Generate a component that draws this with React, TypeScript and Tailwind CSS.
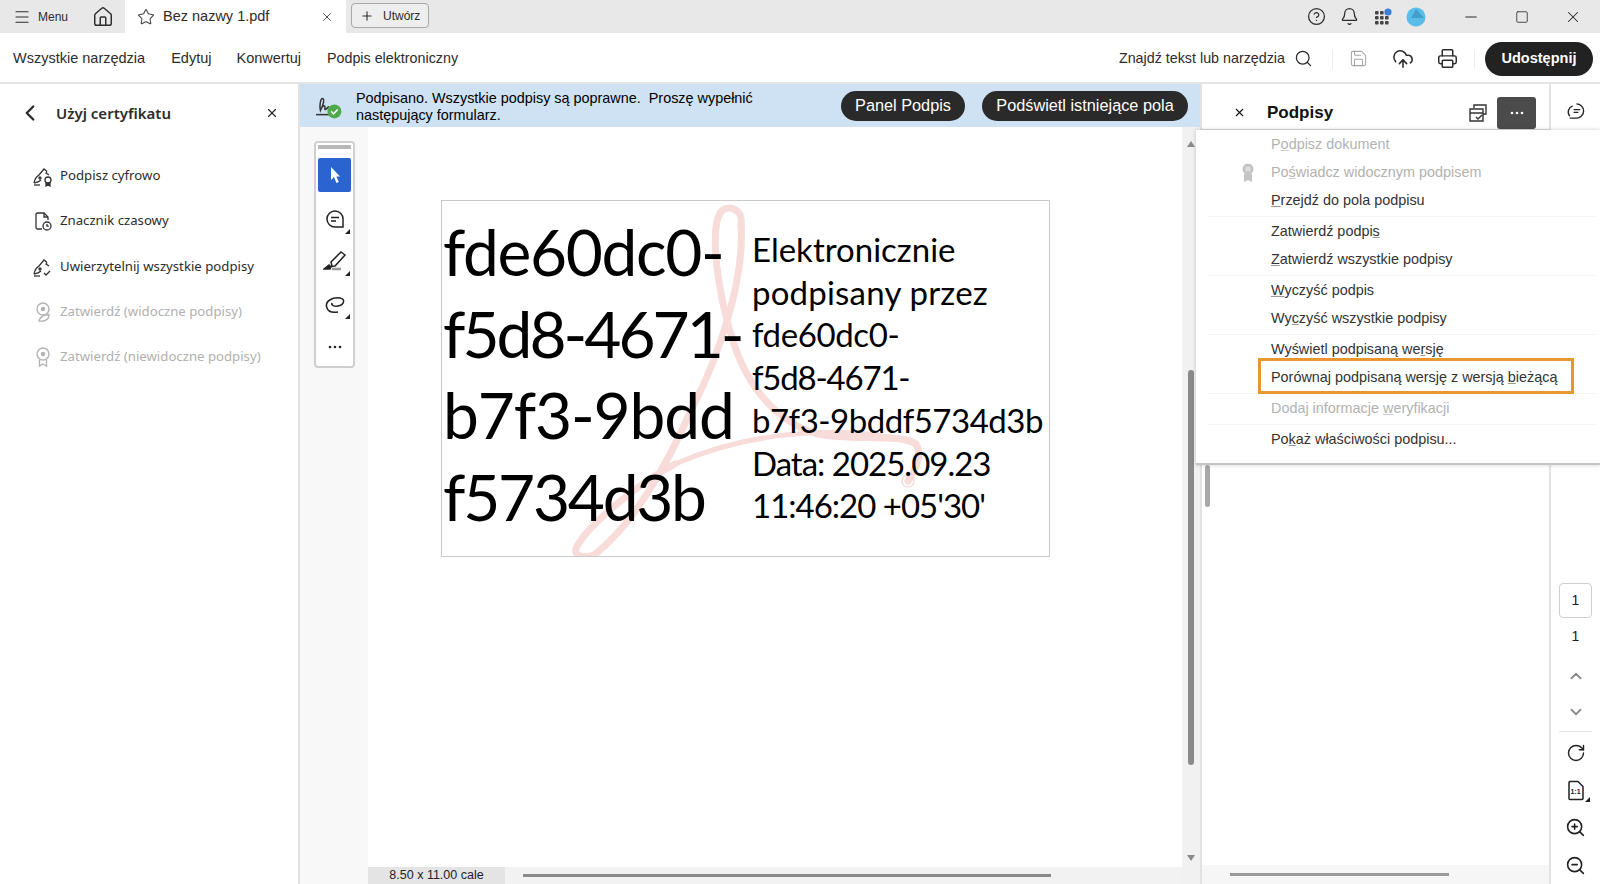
import {
  Bell,
  ChevronDown,
  ChevronLeft,
  ChevronUp,
  CircleHelp,
  CloudUpload,
  House,
  Menu,
  Minus,
  Plus,
  Printer,
  RotateCw,
  Save,
  Search,
  Square,
  Star,
  X,
  ZoomIn,
  ZoomOut,
} from 'lucide-react';

const Corner = ({ className = '' }: { className?: string }) => (
  <svg viewBox="0 0 5 5" className={`absolute w-[5px] h-[5px] ${className}`}>
    <path d="M5 0v5H0z" fill="#222" />
  </svg>
);

const Dots = ({ color }: { color: string }) => (
  <svg viewBox="0 0 14 4" className="w-[14px] h-[4px]">
    <circle cx="2" cy="2" r="1.300" fill={color} />
    <circle cx="7" cy="2" r="1.300" fill={color} />
    <circle cx="12" cy="2" r="1.300" fill={color} />
  </svg>
);

const SignIcon = ({ color, kind }: { color: string; kind: 'seal' | 'clock' | 'check' }) => (
  <svg viewBox="0 0 22 22" fill="none" stroke={color} strokeWidth="1.300" className="w-[22px] h-[22px]">
    {kind === 'clock' ? (
      <>
        <path d="M10 19H5.500A1.500 1.500 0 0 1 4 17.500v-13A1.500 1.500 0 0 1 5.500 3H12l4 4v3" />
        <path d="M12 3v4h4" />
        <circle cx="15" cy="16" r="4" />
        <path d="M15 14v2.200h1.800" />
      </>
    ) : (
      <>
        <path d="M2 18c.5-3 2-6 5-8l5-6 3 2.500" />
        <path d="M15 6.500l-1 1.500 3 2" />
        <path d="M2 18c3-.6 5-1.200 7-3" />
        <circle cx="8" cy="13" r="1" />
        <path d="M2 20h6" />
        {kind === 'seal' ? (
          <>
            <circle cx="16" cy="15" r="3" />
            <path d="M14 18v3l2-1 2 1v-3" fill={color} />
          </>
        ) : (
          <path d="M12 17l2 2 4-4" />
        )}
      </>
    )}
  </svg>
);

const SealIcon = ({ pen }: { pen?: boolean }) => (
  <svg viewBox="0 0 22 22" fill="none" stroke="#b5b5b5" strokeWidth="1.400" className="w-[22px] h-[22px]">
    <circle cx="11" cy="8" r="6" />
    <circle cx="11" cy="8" r="1.600" fill="#b5b5b5" />
    {pen ? (
      <path d="M7 20c.4-2 2-4.500 6-6l4-.5-.6 3.500c-2 2.500-5 3.500-9.400 3z" />
    ) : (
      <path d="M7.500 13.500V20l3.500-2 3.500 2v-6.500" />
    )}
  </svg>
);

const tools = [
  { label: 'Podpisz cyfrowo', icon: <SignIcon color="#333" kind="seal" />, off: false },
  { label: 'Znacznik czasowy', icon: <SignIcon color="#333" kind="clock" />, off: false },
  { label: 'Uwierzytelnij wszystkie podpisy', icon: <SignIcon color="#333" kind="check" />, off: false },
  { label: 'Zatwierdź (widoczne podpisy)', icon: <SealIcon pen />, off: true },
  { label: 'Zatwierdź (niewidoczne podpisy)', icon: <SealIcon />, off: true },
];

const TitleBar = () => (
  <div className="flex h-[33px] bg-[#e8e8e8] text-[#2c2c2c] shrink-0">
    <div className="flex items-center w-[125px] pl-[13px]">
      <Menu className="w-[18px] h-[18px]" strokeWidth={1.6} />
      <span className="ml-[7px] text-[12px]">Menu</span>
      <House className="w-[22px] h-[22px] ml-[24px]" strokeWidth={1.6} />
    </div>
    <div className="flex items-center w-[221px] bg-white pl-[12px]">
      <Star className="w-[18px] h-[18px] text-[#444]" strokeWidth={1.4} />
      <span className="ml-[8px] text-[14.500px]">Bez nazwy 1.pdf</span>
      <X className="w-[14px] h-[14px] ml-[51px] text-[#555]" strokeWidth={1.7} />
    </div>
    <div className="flex items-center h-[25px] w-[78px] mt-[3px] ml-[5px] pl-[8px] bg-[#eeeeee] border border-[#a8a8a8] rounded-[4px]">
      <Plus className="w-[14px] h-[14px]" strokeWidth={1.9} />
      <span className="ml-[9px] text-[12px]">Utwórz</span>
    </div>
    <div className="flex items-center ml-auto">
      <CircleHelp className="w-[19px] h-[19px]" strokeWidth={1.6} />
      <Bell className="w-[19px] h-[19px] ml-[14px]" strokeWidth={1.6} />
      <svg viewBox="0 0 18 18" className="w-[18px] h-[18px] ml-[15px]">
        {[1, 6, 11].map((y) =>
          [1, 6, 11].map((x) => <rect key={`${x}-${y}`} x={x} y={y + 2} width="3.600" height="3.600" rx="1" fill="#444" />),
        )}
        <circle cx="14" cy="4" r="3.600" fill="#3f7fd8" />
      </svg>
      <svg viewBox="0 0 20 20" className="w-[20px] h-[20px] ml-[14px]">
        <circle cx="10" cy="10" r="9.500" fill="#58bde9" />
        <path d="M10 2l8 9H5z" fill="#419fc9" />
      </svg>
      <Minus className="w-[18px] h-[18px] ml-[36px]" strokeWidth={1.4} />
      <Square className="w-[14px] h-[14px] ml-[35px]" strokeWidth={1.4} />
      <X className="w-[18px] h-[18px] ml-[35px] mr-[18px]" strokeWidth={1.4} />
    </div>
  </div>
);

const MainToolbar = () => (
  <div className="flex items-center h-[51px] pt-[2px] bg-white border-b-2 border-[#e4e4e4] text-[#2c2c2c] text-[14.500px] shrink-0">
    <span className="ml-[13px]">Wszystkie narzędzia</span>
    <span className="ml-[26px]">Edytuj</span>
    <span className="ml-[25px]">Konwertuj</span>
    <span className="ml-[26px] text-[14.300px]">Podpis elektroniczny</span>
    <span className="ml-auto text-[14.300px]">Znajdź tekst lub narzędzia</span>
    <Search className="w-[19px] h-[19px] ml-[9px]" strokeWidth={1.6} />
    <div className="w-px h-[20px] bg-[#ececec] ml-[19px]" />
    <Save className="w-[19px] h-[19px] ml-[16px] text-[#a5a5a5]" strokeWidth={1.3} />
    <CloudUpload className="w-[22px] h-[22px] ml-[24px]" strokeWidth={1.7} />
    <Printer className="w-[21px] h-[21px] ml-[23px]" strokeWidth={1.7} />
    <div className="w-px h-[20px] bg-[#ececec] ml-[16px]" />
    <div className="flex items-center justify-center w-[108px] h-[34px] ml-[10px] mr-[7px] rounded-full bg-[#222222] text-white font-bold">
      Udostępnij
    </div>
  </div>
);

const LeftPanel = () => (
  <aside className="flex flex-col w-[300px] shrink-0 bg-white border-r-2 border-[#e2e2e2] font-['Noto_Sans',sans-serif] text-[#2c2c2c]">
    <div className="flex items-center h-[58px] pl-[17px] pr-[19px]">
      <ChevronLeft className="w-[26px] h-[26px]" strokeWidth={2.2} />
      <span className="ml-[13px] text-[15px] font-semibold">Użyj certyfikatu</span>
      <X className="w-[14px] h-[14px] ml-auto" strokeWidth={2} />
    </div>
    <div className="flex flex-col mt-[23px] pl-[32px] gap-[23.300px]">
      {tools.map((t) => (
        <div key={t.label} className={`flex items-center h-[22px] text-[13.200px] ${t.off ? 'text-[#b0b0b0]' : ''}`}>
          {t.icon}
          <span className="ml-[6px]">{t.label}</span>
        </div>
      ))}
    </div>
  </aside>
);

const Banner = () => (
  <div className="flex items-center h-[43px] bg-[#cfe2f3] shrink-0 text-black text-[14.400px]">
    <svg viewBox="0 0 26 24" className="w-[28px] h-[26px] ml-[15px] shrink-0" fill="none">
      <path d="M5 16c3-5 4-11 2-11S4 12 5 16c1-3 3-5 4-4s-1 4 1 3 2-3 3-2" stroke="#333" strokeWidth="1.400" />
      <path d="M1 20h13" stroke="#333" strokeWidth="1.400" />
      <circle cx="18" cy="17" r="6.500" fill="#4ea94b" />
      <path d="M15 17l2.200 2.200 3.800-4" stroke="#fff" strokeWidth="1.500" />
    </svg>
    <div className="ml-[13px] pt-[2px] leading-[17px] w-[474px] whitespace-nowrap">
      Podpisano. Wszystkie podpisy są poprawne.&nbsp; Proszę wypełnić
      <br />
      następujący formularz.
    </div>
    <div className="flex items-center justify-center w-[124px] h-[30px] ml-[11px] rounded-full bg-[#2a2a2a] text-white text-[16.300px]">
      Panel Podpis
    </div>
    <div className="flex items-center justify-center w-[206px] h-[30px] ml-[17px] rounded-full bg-[#2a2a2a] text-white text-[16.300px]">
      Podświetl istniejące pola
    </div>
  </div>
);

const FloatingTools = () => (
  <div className="absolute left-[14px] top-[14px] flex flex-col items-center w-[41px] h-[227px] bg-white border-2 border-[#cfcfcf] rounded-[4px]">
    <div className="w-[33px] h-[4px] bg-[#b8b8b8] mt-[2px]" />
    <div className="flex items-center justify-center w-[33px] h-[34px] mt-[9px] bg-[#2b63d0] rounded-[2px]">
      <svg viewBox="0 0 14 18" className="w-[14px] h-[18px]">
        <path d="M3 1v13l3-3 2.400 6 2.400-1-2.400-5.500H12z" fill="#fff" />
      </svg>
    </div>
    <div className="relative mt-[15px] w-[24px] h-[24px]">
      <svg viewBox="0 0 24 24" fill="none" stroke="#222" strokeWidth="1.500" className="w-[24px] h-[24px]">
        <path d="M12 4a8 8 0 1 0 0 16h8v-8a8 8 0 0 0-8-8z" />
        <path d="M8 10.500h8M8 14h5" />
      </svg>
      <Corner className="right-[-3px] bottom-[-3px]" />
    </div>
    <div className="relative mt-[18px] w-[24px] h-[24px]">
      <svg viewBox="0 0 24 24" fill="none" stroke="#222" strokeWidth="1.500" className="w-[24px] h-[24px]">
        <path d="M8 13L18 3l4 3-10 11-3 .5z" />
        <path d="M1 20l5-4 2 2-1 2z" fill="#222" />
        <path d="M9 20h9" stroke="#999" strokeWidth="2.500" />
      </svg>
      <Corner className="right-[-3px] bottom-[-3px]" />
    </div>
    <div className="relative mt-[20px] w-[24px] h-[24px]">
      <svg viewBox="0 0 24 24" fill="none" stroke="#222" strokeWidth="1.500" className="w-[24px] h-[24px]">
        <path d="M4 15C1 8 10 4 17 5c6 1 4 7-2 8-4 .8-7-1-6-3M4 15c1 3 5 5 11 4" />
      </svg>
      <Corner className="right-[-3px] bottom-[-2px]" />
    </div>
    <div className="mt-[28px]">
      <Dots color="#222" />
    </div>
  </div>
);

const PdfStamp = () => (
  <div className="relative w-[609px] h-[357px] mt-[73px] ml-[73px] bg-white border border-[#c9c9c9] font-['Lato',sans-serif] text-black overflow-hidden">
    <svg viewBox="0 0 609 357" fill="none" stroke="#f7dcda" strokeLinecap="round" className="absolute left-0 top-0 w-[609px] h-[357px]">
      <path d="M299 24C302 8 285 2 278 12 268 30 275 90 291 140 305 185 335 222 376 233 410 240 460 232 474 243 482 255 470 275 466 280" strokeWidth="7" />
      <path d="M474 243C420 225 320 225 233 263" strokeWidth="5" />
      <path d="M299 24C303 80 275 160 250 207 225 265 190 325 152 354 140 358 130 354 135 345 150 320 200 280 233 263" strokeWidth="7" />
      <circle cx="466" cy="280" r="6" strokeWidth="1.500" />
    </svg>
    <div className="relative flex">
      <div className="w-[310px] pl-[1px] pt-[10px] text-[64px] leading-[81.600px] whitespace-nowrap">
        <div className="tracking-[-1.350px]">fde60dc0-</div>
        <div className="tracking-[-3px]">f5d8-4671-</div>
        <div className="tracking-[-1.150px]">b7f3-9bdd</div>
        <div className="tracking-[-2.250px]">f5734d3b</div>
      </div>
      <div className="pt-[27px] text-[33px] leading-[42.700px] whitespace-nowrap">
        <div>Elektronicznie</div>
        <div className="tracking-[0.200px]">podpisany przez</div>
        <div className="tracking-[-0.400px]">fde60dc0-</div>
        <div className="tracking-[-1.200px]">f5d8-4671-</div>
        <div className="tracking-[-0.500px]">b7f3-9bddf5734d3b</div>
        <div className="tracking-[-1px]">Data: 2025.09.23</div>
        <div className="tracking-[-1px]">11:46:20 +05'30'</div>
      </div>
    </div>
  </div>
);

const DocArea = () => (
  <div className="flex flex-1 min-h-0">
    <div className="relative w-[68px] shrink-0 bg-[#f8f8f8]">
      <FloatingTools />
    </div>
    <div className="flex flex-col w-[814px] bg-white">
      <div className="flex-1">
        <PdfStamp />
      </div>
      <div className="flex items-center h-[17px] bg-[#f2f2f2]">
        <div className="flex items-center justify-center w-[137px] h-[17px] bg-[#e4e4e4] text-[12.500px] text-[#222]">
          8.50 x 11.00 cale
        </div>
        <div className="w-[528px] h-[3px] ml-[18px] bg-[#8a8a8a]" />
      </div>
    </div>
    <div className="flex flex-col items-center w-[18px] bg-[#f1f1f1]">
      <div className="mt-[14px] w-0 h-0 border-x-[4px] border-x-transparent border-b-[6px] border-b-[#8a8a8a]" />
      <div className="w-[6px] h-[395px] mt-[223px] bg-[#8a8a8a] rounded-full" />
      <div className="mt-[90px] w-0 h-0 border-x-[4px] border-x-transparent border-t-[6px] border-t-[#8a8a8a]" />
    </div>
  </div>
);

const RightPanel = () => (
  <div className="flex w-[400px] shrink-0 bg-white border-l-2 border-[#e2e2e2]">
    <div className="flex flex-col w-[349px] border-r-2 border-[#e2e2e2]">
      <div className="flex items-center h-[46px] pt-[12px] shrink-0 border-b border-[#d8d8d8] text-[#111]">
        <X className="w-[13px] h-[13px] ml-[31px]" strokeWidth={2} />
        <span className="ml-[21px] text-[17px] font-bold">Podpisy</span>
        <svg viewBox="0 0 22 22" fill="none" stroke="#333" strokeWidth="1.400" className="w-[22px] h-[22px] ml-[134px]">
          <path d="M7 6V3h12v9h-3M3 7h13v12H3zM3 11h13M9 15l2 2 4-4" />
        </svg>
        <div className="flex items-center justify-center w-[39px] h-[32px] ml-[8px] bg-[#4b4b4b] rounded-[3px]">
          <Dots color="#fff" />
        </div>
      </div>
      <div className="flex-1 pl-[3px]">
        <div className="w-[5px] h-[42px] mt-[335px] bg-[#a8a8a8] rounded-full" />
      </div>
      <div className="flex items-center h-[19px] bg-[#f6f6f6]">
        <div className="w-[219px] h-[3px] ml-[28px] bg-[#9a9a9a]" />
      </div>
    </div>
    <div className="flex flex-col items-center flex-1 text-[#222]">
      <svg viewBox="0 0 22 22" fill="none" stroke="#222" strokeWidth="1.400" className="w-[21px] h-[21px] mt-[17px]">
        <path d="M12 3a7.500 7.500 0 1 1 0 15H5M5 16a7 7 0 0 1 3-11" />
        <path d="M9 9h7M9 12h5" />
      </svg>
      <div className="flex items-center justify-center w-[33px] h-[35px] mt-[461px] border border-[#cfcfcf] rounded-[4px] text-[14px]">1</div>
      <div className="mt-[10px] text-[14px] leading-[17px]">1</div>
      <ChevronUp className="w-[18px] h-[18px] mt-[22px] text-[#8c8c8c]" strokeWidth={2.4} />
      <ChevronDown className="w-[18px] h-[18px] mt-[18px] text-[#8c8c8c]" strokeWidth={2.4} />
      <div className="w-[33px] h-px bg-[#e4e4e4] mt-[10px]" />
      <RotateCw className="w-[20px] h-[20px] mt-[11px]" strokeWidth={1.7} />
      <div className="relative w-[20px] h-[21px] mt-[17px] flex items-center justify-center">
        <svg viewBox="0 0 20 21" fill="none" stroke="#222" strokeWidth="1.500" className="absolute left-0 top-0 w-[20px] h-[21px]">
          <path d="M4 1.500h8l5 5v12a1 1 0 0 1-1 1H4a1 1 0 0 1-1-1v-16a1 1 0 0 1 1-1z" />
        </svg>
        <span className="relative mt-[4px] text-[7px] font-bold">1:1</span>
        <Corner className="right-[-4px] bottom-[-1px]" />
      </div>
      <ZoomIn className="w-[21px] h-[21px] mt-[16px]" strokeWidth={1.8} />
      <ZoomOut className="w-[21px] h-[21px] mt-[17px]" strokeWidth={1.8} />
    </div>
  </div>
);

const Item = ({ off, top = 0, children }: { off?: boolean; top?: number; children: React.ReactNode }) => (
  <div
    className={`flex items-center h-[28px] pl-[75px] text-[14.400px] ${off ? 'text-[#b2b2b2]' : 'text-[#333]'}`}
    style={top ? { marginTop: top } : undefined}
  >
    <span>{children}</span>
  </div>
);

const Sep = () => <div className="h-px ml-[11px] mr-[5px] mt-[1px] -mb-[2px] bg-[#f3f3f3]" />;

const SignaturesMenu = () => (
  <div className="absolute left-[1196px] top-[130px] w-[404px] h-[335px] pt-[1px] bg-white border-b-2 border-[#c4c4c4] shadow-[0_0_4px_rgba(0,0,0,0.2)]">
    <Item off>P<u className="decoration-[#ccc]">o</u>dpisz dokument</Item>
    <div className="relative">
      <svg viewBox="0 0 16 22" fill="none" className="absolute left-[44px] top-[3px] w-[16px] h-[22px]">
        <circle cx="8" cy="7" r="5.500" fill="#c4c4c4" />
        <circle cx="8" cy="7" r="2.500" fill="#e2e2e2" />
        <path d="M4 12v8l4-2 4 2v-8" fill="#c4c4c4" />
      </svg>
      <Item off>Po<u className="decoration-[#ccc]">ś</u>wiadcz widocznym podpisem</Item>
    </div>
    <Item><u className="decoration-[#999]">P</u>rzejdź do pola podpisu</Item>
    <Sep />
    <Item top={3}>Zatwierdź podpi<u className="decoration-[#999]">s</u></Item>
    <Item><u className="decoration-[#999]">Z</u>atwierdź wszystkie podpisy</Item>
    <Sep />
    <Item top={3}><u className="decoration-[#999]">W</u>yczyść podpis</Item>
    <Item>Wy<u className="decoration-[#999]">c</u>zyść wszystkie podpisy</Item>
    <Sep />
    <Item top={3}>Wyświetl podpisaną we<u className="decoration-[#999]">r</u>sję</Item>
    <Item>Porównaj podpisaną wersję z wersją <u className="decoration-[#999]">b</u>ieżącą</Item>
    <Sep />
    <Item off top={3}>Dodaj informacje <u className="decoration-[#ccc]">w</u>eryfikacji</Item>
    <Sep />
    <Item top={3}>Po<u className="decoration-[#999]">k</u>aż właściwości podpisu...</Item>
    {/* orange highlight on top of the menu */}
    <div className="absolute left-[62px] top-[228px] w-[316px] h-[36px] border-[3px] border-[#e8972f]" />
  </div>
);

export default function App() {
  return (
    <div className="relative flex flex-col w-[1600px] h-[884px] overflow-hidden bg-white font-['Liberation_Sans',Arial,sans-serif]">
      <TitleBar />
      <MainToolbar />
      <div className="flex flex-1 min-h-0">
        <LeftPanel />
        <div className="flex flex-col w-[900px] shrink-0">
          <Banner />
          <DocArea />
        </div>
        <RightPanel />
      </div>
      <SignaturesMenu />
    </div>
  );
}
